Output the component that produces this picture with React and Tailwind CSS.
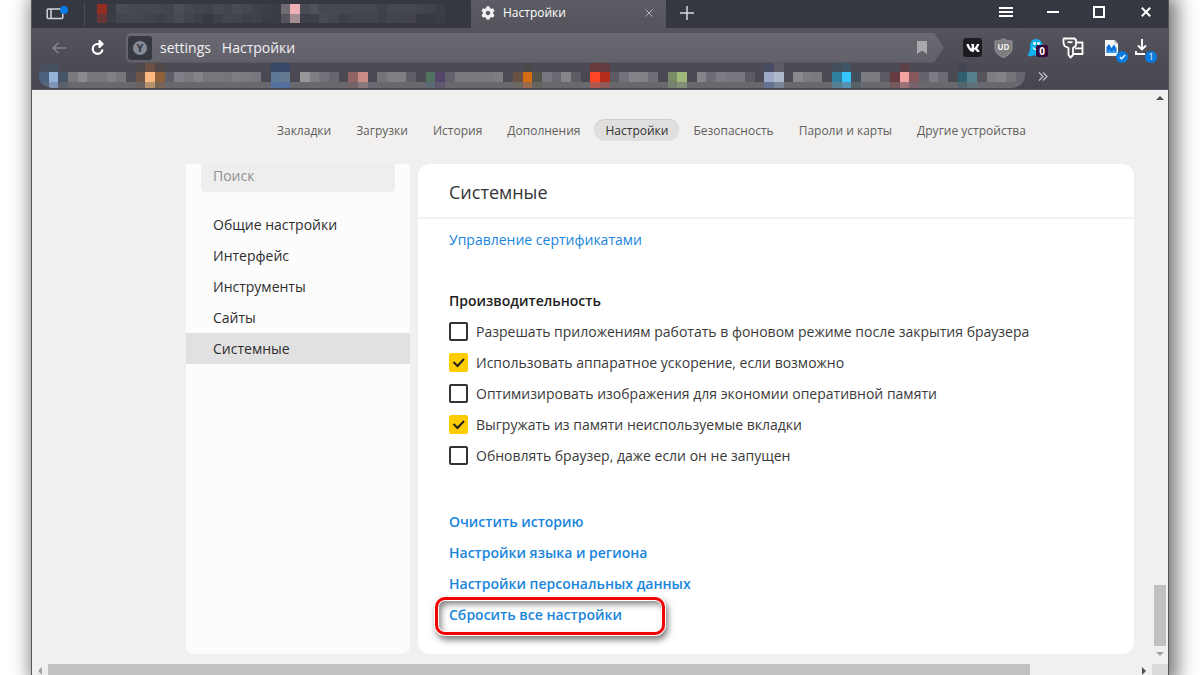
import React, { useState } from 'react';
import { FaCog, FaVk } from 'react-icons/fa';

// Side of one mosaic tile
const TILE = 9.67;

// Columns of tiles: [middle, top, bottom], empty entries keep the bar colour
const bookmarkTiles = [
  ['#4b607f', '#48505d', '#5b6778'], ['#95b3d9', '#45505f', '#7d94b2'], ['#475366', '', '#5c6068'],
  ['#79787e'], ['#8a898c'], ['#77767c'], ['#77767c'], ['#818086'], ['#77767c'], ['#504f58'],
  ['#6e5444', '#4c484c', '#6b625f'], ['#fbb87f', '#6a5143', '#b5906d'], ['#8f6139', '#514847', '#786457'],
  ['#5f5e66'], ['#817f87'], ['#7a7980'], ['#85838a'], ['#77767c'], ['#77767c'], ['#75747b'],
  ['#7d7c83'], ['#7b7a81'], ['#77767c'], ['#4a4953'],
  ['#5f7897', '#374968', '#52709b'], ['#64798f', '#38486a', '#52709b'], ['#494853'],
  ['#979699'], ['#7f7e84'], ['#74737b'], ['#68676f'], ['#4c4b54'],
  ['#906463', '', '#736266'], ['#c98b85', '', '#8a787d'], ['#4a4953'],
  ['#75747b'], ['#807f86'], ['#807f86'], ['#605f67'], ['#4b4a53'],
  ['#517260', '', '#5c6a78'], ['#56456b', '', '#60596f'], ['#63626a'],
  ['#7a7980'], ['#7a7980'], ['#7a7980'], ['#7a7980'], ['#7e7d82'], ['#4c4b54'],
  ['#6b5145', '', '#6e6863'], ['#d66c12', '#4b4a49', '#9a6b4d'], ['#55534d', '', '#66645f'],
  ['#77767e'], ['#6a6972'], ['#868589'], ['#5d5c65'], ['#4a4953'],
  ['#ff4624', '#693a3c', '#b35751'], ['#b52c1d', '#643b3e', '#915a59'],
  ['#5c5b64'], ['#73727a'], ['#85848a'], ['#828186'], ['#706f77'], ['#4b4a53'],
  ['#7b8a66', '', '#788070'], ['#a0b97b', '', '#838f78'], ['#4b4a53'],
  ['#868589'], ['#6e6d75'], ['#7d7c84'], ['#78777f'], ['#78777f'], ['#5d5c65'], ['#4b4a53'],
  ['#9ea9c8', '#474c63', '#65718f'], ['#afb8cc', '#5f5e68', '#798599'], ['#4c4b54'],
  ['#8a898c'], ['#7d7c82'], ['#7a7980'], ['#4b4a53'],
  ['#2f7d9f', '#43505b', '#567f92'], ['#36c5ff', '#3e5668', '#5793af'], ['#434f5b', '', '#596269'],
  ['#7d7c83'], ['#7b7a80'], ['#5b5a63'],
  ['#643c41', '', '#75595d'], ['#f4a3a1', '#5d4147', '#9d7276'], ['#85585c', '', '#78636a'],
  ['#65646d'], ['#7d7c84'], ['#6c6b74'], ['#4b4a53'],
  ['#2f5f70', '#424650', '#53656f'], ['#57818d', '', '#60727a'], ['#55545d'],
  ['#7d7c80'], ['#838286'], ['#75747b'], ['#66656e'],
];

// Rows of tiles in the strip of background tabs
const tabTiles = [
  ['#932d22', '#3a3c45', '#4a4b54', '#474951', '#44474f', '#44474f', '#44474f', '#42454d', '#4b4e57', '#454850', '#42454d', '#40434b', '#474a52', '#42454d', '#484b53', '#44474f', '#3f424a', '#3c3f47', '#3b3d45', '#6e6b72', '#eeb1b3', '#4a4a54', '#51515b', '#454850', '#454850', '#454850', '#454850', '#454850', '#454850', '#3f424a', '#454850', '#454850', '#454850', '#44444d', '#3f424a', '#3a3d45'],
  ['#673638', '#3b3d45', '#42454d', '#44474f', '#44474f', '#41444c', '#3d4048', '#41444c', '#484b53', '#42454d', '#3d4048', '#363941', '#3d4048', '#44474f', '#42454d', '#3d4048', '#3f424a', '#3b3d45', '#3a3c44', '#55545c', '#a38c92', '#3d4048', '#3d4048', '#484b53', '#44474f', '#3d4048', '#42454d', '#42454d', '#42454d', '#3d4048', '#42454d', '#42454d', '#44434c', '#363941', '#383b43', '#3a3d45'],
];

const navItems = ['Закладки', 'Загрузки', 'История', 'Дополнения', 'Настройки', 'Безопасность', 'Пароли и карты', 'Другие устройства'];

const sections = ['Общие настройки', 'Интерфейс', 'Инструменты', 'Сайты', 'Системные'];

const performance = [
  { id: 'background', label: 'Разрешать приложениям работать в фоновом режиме после закрытия браузера', on: false },
  { id: 'gpu', label: 'Использовать аппаратное ускорение, если возможно', on: true },
  { id: 'images', label: 'Оптимизировать изображения для экономии оперативной памяти', on: false },
  { id: 'unload', label: 'Выгружать из памяти неиспользуемые вкладки', on: true },
  { id: 'update', label: 'Обновлять браузер, даже если он не запущен', on: false },
];

const links = ['Очистить историю', 'Настройки языка и региона', 'Настройки персональных данных', 'Сбросить все настройки'];

const TabMosaic = () => (
  <svg width="349" height="20" viewBox="0 0 349 20" className="shrink-0" shapeRendering="crispEdges" aria-hidden="true">
    {tabTiles.map((row, y) =>
      row.map((fill, x) => <rect key={`${x}-${y}`} x={x * TILE} y={y * TILE} width={TILE} height={TILE} fill={fill} />)
    )}
  </svg>
);

const BookmarkMosaic = () => (
  <svg width="987" height="26" viewBox="0 0 987 26" className="shrink-0" aria-hidden="true">
    <clipPath id="strip">
      <path d="M0 0H987V10Q985 25 972 25H12Q0 22 0 15Z" />
    </clipPath>
    <g clipPath="url(#strip)" shapeRendering="crispEdges">
      {bookmarkTiles.map(([mid, top, bottom], x) => (
        <g key={x}>
          {top && <rect x={x * TILE} y="0" width={TILE} height="10" fill={top} />}
          <rect x={x * TILE} y="9" width={TILE} height="10" fill={mid} />
          <rect x={x * TILE} y="19" width={TILE} height="6" fill={bottom || '#69686f'} />
        </g>
      ))}
    </g>
  </svg>
);

const TabStrip = () => (
  <div className="h-7 flex items-center bg-[#363841] text-white">
    <button aria-label="Боковая панель" className="ml-[14px] shrink-0">
      <svg width="24" height="18" viewBox="0 0 24 18" fill="none" stroke="#d3d4d7" strokeWidth="1.5">
        <rect x="1.2" y="4" width="15.6" height="9.5" rx="1" />
        <path d="M5 4v9.5" />
        <circle cx="18" cy="5" r="4" fill="#0a7be0" stroke="none" />
      </svg>
    </button>
    <div className="ml-[14px] mr-3 w-px h-6 bg-[#4b4d56] shrink-0" />
    <TabMosaic />
    <div className="ml-[25px] w-[195px] h-7 px-[10px] pb-[2px] flex items-center bg-linear-to-b from-[#5b5c65] to-[#55545d] shrink-0">
      <FaCog size={14} className="text-[#f1f1f2]" />
      <span className="ml-2 text-xs">Настройки</span>
      <button aria-label="Закрыть вкладку" className="ml-auto mr-[3px]">
        <svg width="8" height="8" viewBox="0 0 9 9" stroke="#b6b6bb" strokeWidth="1.1">
          <path d="M.5 .5l8 8M8.500 .5l-8 8" />
        </svg>
      </button>
    </div>
    <button aria-label="Новая вкладка" className="ml-[14px] pb-[2px]">
      <svg width="14" height="14" viewBox="0 0 14 14" stroke="#d8d8da" strokeWidth="1.5">
        <path d="M7 0v14M0 7h14" />
      </svg>
    </button>
    <div className="ml-auto mr-[17px] pb-1 flex items-center gap-[34px]">
      <button aria-label="Меню">
        <svg width="14" height="12" viewBox="0 0 14 12" stroke="#fff" strokeWidth="2">
          <path d="M0 2h14M0 6h14M0 10h14" />
        </svg>
      </button>
      <button aria-label="Свернуть">
        <svg width="12" height="12" viewBox="0 0 12 12" stroke="#fff" strokeWidth="2">
          <path d="M0 6h12" />
        </svg>
      </button>
      <button aria-label="Развернуть">
        <svg width="12" height="12" viewBox="0 0 12 12" stroke="#fff" strokeWidth="2" fill="none">
          <rect x="1" y="1" width="10" height="10" />
        </svg>
      </button>
      <button aria-label="Закрыть" className="ml-[2px]">
        <svg width="10" height="10" viewBox="0 0 10 10" stroke="#fff" strokeWidth="2">
          <path d="M.8 .8l8.400 8.400M9.200 .8l-8.400 8.400" />
        </svg>
      </button>
    </div>
  </div>
);

const Extensions = () => (
  <div className="ml-[19px] mr-[11px] flex items-center shrink-0">
    <button aria-label="ВКонтакте" className="size-[19px] rounded-[3px] bg-[#1c1c20] flex items-center justify-center text-white">
      <FaVk size={14} />
    </button>
    <button aria-label="uBlock" className="ml-3">
      <svg width="19" height="20" viewBox="0 0 19 20">
        <path d="M9.500 .5C7 2.500 4 3 1 3v7c0 5 4 7.500 8.500 9.500C14 17.500 18 15 18 10V3c-3 0-6-.5-8.500-2.500z" fill="#7e7e80" stroke="#96969a" />
        <text x="9.500" y="12" textAnchor="middle" fontSize="8" fontWeight="700" fill="#f0f0f0">UD</text>
      </svg>
    </button>
    <button aria-label="Ghostery" className="ml-[13px] relative">
      <svg width="22" height="20" viewBox="0 0 22 20">
        <path d="M4 9c0-5 2-8 6-8 5 0 6.500 4 6.500 8v9l-3.500-1-2.500 1.500L8 17l-2.500 1.500-4.500-1.500c2.500-1.500 3-4.500 3-8z" fill="#0fb0ef" />
        <circle cx="8.500" cy="5.500" r="1.400" fill="#fff" />
        <circle cx="12.500" cy="5.500" r="1.400" fill="#fff" />
        <path d="M7 9.500q1.500 3 6 2" stroke="#fff" strokeWidth="1.300" fill="none" />
      </svg>
      <span className="absolute left-[10px] top-[7px] size-3 rounded-[2px] bg-[#35063a] text-[10px] leading-3 font-bold text-white text-center">0</span>
    </button>
    <button aria-label="Пароли" className="ml-[14px]">
      <svg width="22" height="22" viewBox="0 0 22 22" fill="none" stroke="#fff" strokeWidth="1.800" strokeLinejoin="round">
        <path d="M2 1.500h10.500l1.500 1.500v5.500L11 11v7l-2.500 2.500L6.500 18v-7L2.500 9 1.500 6V2z" />
        <path d="M5.500 5.200h5" />
        <path d="M14 5.500h6.500v11.500H11.500M13 11.300h7.500" />
      </svg>
    </button>
    <button aria-label="Изображение" className="ml-5 relative">
      <svg width="15" height="18" viewBox="0 0 15 18">
        <path d="M1 1h9.500L14 4.500V17H1z" fill="#f4f4f6" />
        <path d="M10.500 1v3.500H14z" fill="#b9bcc2" />
        <path d="M2.500 14V8L5 5l2.500 4L10 5.500l2.500 4V14z" fill="#0a74dc" />
        <path d="M2.500 14l3-3 2 2 2.500-2.500 2.500 3.500z" fill="#3f9bf0" />
      </svg>
      <span className="absolute left-3 top-[12px] size-3 rounded-full bg-[#0a7be0] flex items-center justify-center">
        <svg width="7" height="6" viewBox="0 0 7 6" fill="none" stroke="#fff" strokeWidth="1.300">
          <path d="M.8 3l1.800 1.800L6.200 1" />
        </svg>
      </span>
    </button>
    <button aria-label="Загрузки" className="ml-4 relative">
      <svg width="22" height="18" viewBox="0 0 22 18" fill="none" stroke="#fff" strokeWidth="1.900">
        <path d="M7 0v10.500M3 6.500l4 4 4-4M1 12v3h9" />
      </svg>
      <span className="absolute left-[10px] top-[12px] size-3 rounded-full bg-[#0a7be0] text-[9px] leading-3 text-white text-center">1</span>
    </button>
  </div>
);

const Toolbar = () => (
  <div className="h-[35px] pt-1 flex items-center">
    <button aria-label="Назад" className="ml-5 shrink-0">
      <svg width="14" height="12" viewBox="0 0 14 12" fill="none" stroke="#85848c" strokeWidth="1.500">
        <path d="M14 6H1M6.500 .7L1.200 6l5.300 5.300" />
      </svg>
    </button>
    <button aria-label="Обновить" className="ml-[25px] shrink-0">
      <svg width="14" height="16" viewBox="0 0 14 16" fill="none" stroke="#fff" strokeWidth="2.200">
        <path d="M9 4H6.500A4.900 4.900 0 1 0 11.500 9.500" />
        <path d="M7.500 0h1.500l4 4-4 4H7.500z" fill="#fff" stroke="none" />
      </svg>
    </button>
    <div className="ml-[21px] h-[30px] min-w-0 flex-1 flex items-center bg-linear-to-b from-[#6a6972] to-[#62616a] rounded-l-[5px] [clip-path:polygon(0_0,calc(100%-10px)_0,100%_50%,calc(100%-10px)_100%,0_100%)]">
      <div className="ml-[2px] size-6 rounded-[3px] bg-[#363842] flex items-center justify-center shrink-0">
        <span className="size-[14px] rounded-full bg-[#858c96] text-[11px] leading-[14px] font-bold text-center text-[#363842]">Y</span>
      </div>
      <input
        type="text"
        aria-label="Адрес"
        defaultValue="settings   Настройки"
        className="ml-2 min-w-0 flex-1 bg-transparent text-sm text-[#f1f1f2] focus:outline-none"
      />
      <button aria-label="В закладки" className="mr-[17px]">
        <svg width="10" height="13" viewBox="0 0 10 13" fill="#a9a9ad">
          <path d="M0 0h10v13L5 9.500 0 13z" />
        </svg>
      </button>
    </div>
    <Extensions />
  </div>
);

const TopNav = () => (
  <nav className="h-[74px] pt-[29px] pl-[234px] flex items-start gap-[3px]">
    {navItems.map((item) => (
      <a
        key={item}
        href="#"
        className={`px-[11px] h-[22px] leading-6 rounded-full text-xs whitespace-nowrap
          ${item === 'Настройки' ? 'bg-[#e0dfdd] text-[#333] shadow-[inset_0_1px_0_#cfcecc]' : 'text-[#5e5e5e]'}`}
      >
        {item}
      </a>
    ))}
  </nav>
);

const Sidebar = () => (
  <aside className="w-56 shrink-0 rounded-b-lg bg-[#fcfcfc] text-sm text-[#2e2e2e]">
    <input
      type="search"
      placeholder="Поиск"
      aria-label="Поиск"
      className="block ml-[15px] mb-[17px] w-[194px] h-7 pl-3 pb-[6px] rounded-b bg-[#eeeeee] placeholder-[#8f8f8f] focus:outline-none"
    />
    {sections.map((name) => (
      <a key={name} href="#" className={`block h-[31px] leading-[31px] pl-[27px] ${name === 'Системные' ? 'bg-[#e1e1e1]' : ''}`}>
        {name}
      </a>
    ))}
  </aside>
);

const CheckRow = ({ id, label, checked, onToggle }) => (
  <div className="h-[31px] flex items-center gap-2">
    <span className="relative size-[19px] shrink-0">
      <input
        type="checkbox"
        id={id}
        checked={checked}
        onChange={onToggle}
        className="block appearance-none size-[19px] rounded-[2px] border-2 border-[#333] bg-white checked:border-[#ffcc00] checked:bg-[#ffcc00]"
      />
      {checked && (
        <svg className="absolute inset-0 pointer-events-none" width="19" height="19" viewBox="0 0 19 19" fill="none" stroke="#222" strokeWidth="2">
          <path d="M4.500 9l4 4 6.500-7" />
        </svg>
      )}
    </span>
    <label htmlFor={id}>{label}</label>
  </div>
);

const SystemPanel = () => {
  const [options, setOptions] = useState(performance);

  const toggle = (id) => {
    setOptions((prev) => prev.map((o) => (o.id === id ? { ...o, on: !o.on } : o)));
  };

  return (
    <main className="flex-1 min-w-0 rounded-xl bg-white text-sm text-[#3a3a3a] whitespace-nowrap">
      <h1 className="h-[55px] pl-[31px] leading-[56px] text-lg border-b-2 border-[#f1f1f1] text-[#333]">Системные</h1>
      <div className="px-[31px] pt-[5px] pb-6">
        <a href="#" className="block leading-[31px] text-[#1a85dc]">Управление сертификатами</a>
        <h2 className="mt-[30px] leading-[31px] font-semibold text-[#222]">Производительность</h2>
        {options.map((o) => (
          <CheckRow key={o.id} id={o.id} label={o.label} checked={o.on} onToggle={() => toggle(o.id)} />
        ))}
        <ul className="mt-[35px] font-semibold text-[#1a85dc]">
          {links.map((text, i) => (
            <li key={text} className="relative leading-[31px]">
              {/* Marker round the reset link */}
              {i === links.length - 1 && (
                <span className="absolute -left-[14px] -top-[2px] w-[230px] h-[38px] rounded-[10px] border-[3px] border-[#f40000] pointer-events-none shadow-[0_0_0_1px_#fff,2px_4px_6px_1px_rgba(0,0,0,0.5),inset_0_0_0_1px_#fff,inset_3px_4px_6px_rgba(0,0,0,0.5)]" />
              )}
              <a href="#" className="relative">{text}</a>
            </li>
          ))}
        </ul>
      </div>
    </main>
  );
};

const Arrow = ({ d, fill }) => (
  <svg width="8" height="8" viewBox="0 0 8 8" fill={fill} className="shrink-0" aria-hidden="true">
    <path d={d} />
  </svg>
);

const App = () => (
  <div className="h-screen overflow-hidden bg-white pl-[31px] pr-[31px] font-['Open_Sans','Noto_Sans',sans-serif]">
    <div className="border-x border-[#555] shadow-[4px_0_18px_4px_rgba(0,0,0,0.55)]">
      <TabStrip />
      <div className="bg-linear-to-b from-[#55545d] to-[#474650] border-b border-[#5f5e66]">
        <Toolbar />
        <div className="h-[26px] pl-[7px] flex items-center">
          <BookmarkMosaic />
          <button aria-label="Другие закладки" className="ml-3">
            <svg width="10" height="9" viewBox="0 0 10 9" fill="none" stroke="#c4c4c8" strokeWidth="1.200">
              <path d="M1 .5l4 4-4 4M5 .5l4 4-4 4" />
            </svg>
          </button>
        </div>
      </div>

      <div className="flex bg-[#f1f0ee]">
        <div className="flex-1 min-w-0">
          <TopNav />
          <div className="pl-[154px] pr-[18px] pb-[10px] flex gap-2">
            <Sidebar />
            <SystemPanel />
          </div>
        </div>
        {/* Vertical scrollbar */}
        <div className="w-4 shrink-0 flex flex-col items-center justify-between bg-[#f0f0f0]">
          <div className="pt-1">
            <Arrow d="M0 6l4-4 4 4z" fill="#505050" />
          </div>
          <div className="flex flex-col items-center">
            <div className="w-3 h-[61px] bg-[#c1c1c1]" />
            <div className="pt-1 pb-[6px]">
              <Arrow d="M0 2l4 4 4-4z" fill="#a3a3a3" />
            </div>
          </div>
        </div>
      </div>

      {/* Horizontal scrollbar */}
      <div className="h-4 flex bg-[#f0f0f0]">
        <div className="flex-1 min-w-0 flex items-start">
          <div className="pt-[3px] pl-1 w-4 shrink-0">
            <Arrow d="M6 0L2 4l4 4z" fill="#a3a3a3" />
          </div>
          <div className="flex-1 mr-[110px] h-4 bg-[#c1c1c1]" />
          <div className="pt-[3px] w-3 shrink-0">
            <Arrow d="M2 0l4 4-4 4z" fill="#505050" />
          </div>
        </div>
        <div className="w-4 shrink-0 bg-[#dcdcdc]" />
      </div>
    </div>
  </div>
);

export default App;
